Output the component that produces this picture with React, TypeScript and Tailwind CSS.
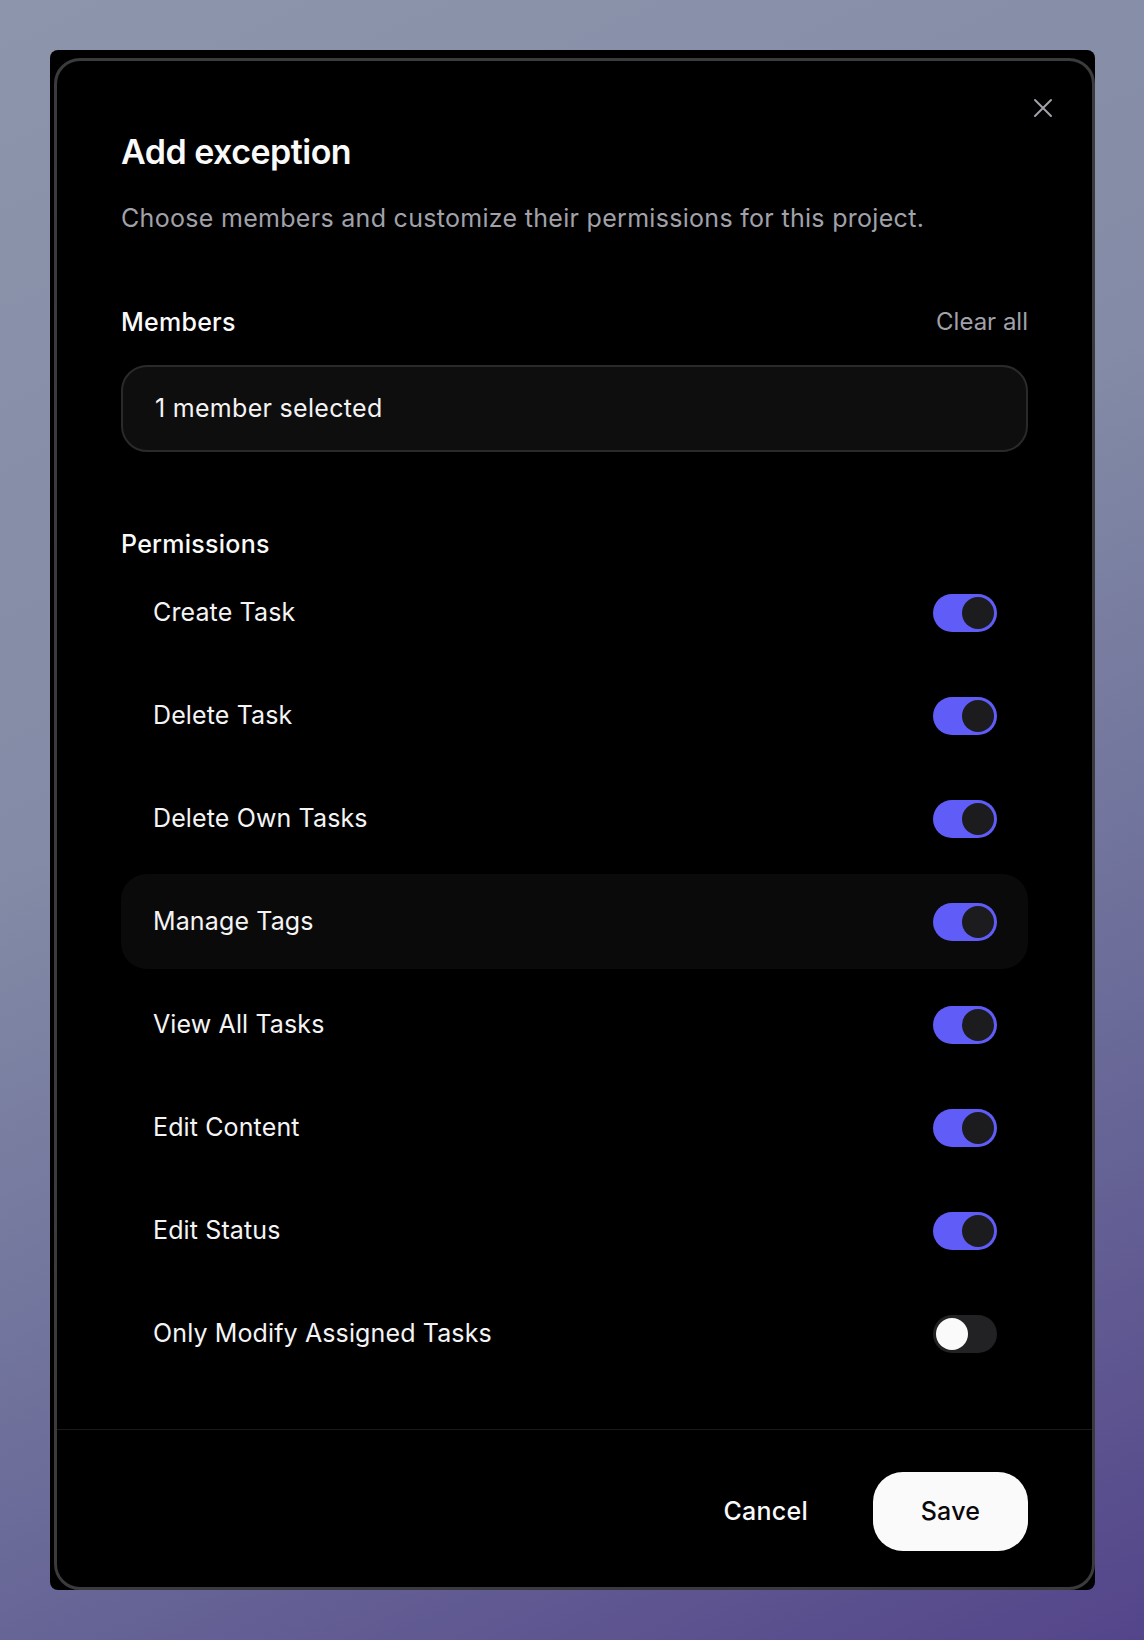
import { useState } from "react";

const permissions = [
  { key: "create", label: "Create Task", on: true },
  { key: "delete", label: "Delete Task", on: true },
  { key: "deleteOwn", label: "Delete Own Tasks", on: true },
  { key: "tags", label: "Manage Tags", on: true },
  { key: "viewAll", label: "View All Tasks", on: true },
  { key: "content", label: "Edit Content", on: true },
  { key: "status", label: "Edit Status", on: true },
  { key: "assigned", label: "Only Modify Assigned Tasks", on: false },
];

function Toggle({ on, onChange }: { on: boolean; onChange: () => void }) {
  return (
    <button
      type="button"
      role="switch"
      aria-checked={on}
      onClick={onChange}
      className={`flex h-[38px] w-[64px] shrink-0 items-center rounded-full p-[3px] ${
        on ? "justify-end bg-[#5f5cf7]" : "justify-start bg-[#222224]"
      }`}
    >
      <span className={`block h-[32px] w-[32px] rounded-full ${on ? "bg-[#1c1c1f]" : "bg-[#fafafa]"}`} />
    </button>
  );
}

export default function App() {
  const [state, setState] = useState(() => Object.fromEntries(permissions.map((p) => [p.key, p.on])));

  return (
    <div
      className="min-h-[1640px] w-full bg-[linear-gradient(155deg,#8c95ab_0%,#838ba6_40%,#6b6c99_70%,#54458a_100%)] pl-[50px] pt-[50px]"
      style={{ fontFamily: "Inter, 'Noto Sans', sans-serif" }}
    >
      <div className="w-[1045px] rounded-[8px] bg-black pl-[4px] pt-[8px]">
        <div className="relative flex flex-col overflow-hidden rounded-[26px] border-[3px] border-[#3b3b3e] bg-black">
          <button type="button" aria-label="Close" className="absolute right-[37px] top-[35px] p-[2px] text-[#a1a1aa]">
            <svg width="20" height="20" viewBox="0 0 20 20" fill="none" stroke="currentColor" strokeWidth="2" strokeLinecap="round">
              <path d="M2 2 18 18M18 2 2 18" />
            </svg>
          </button>

          <div className="px-[64px] pb-[48px] pt-[71px]">
            <h2 className="text-[34px] font-semibold leading-[40px] tracking-[-0.015em] text-[#fafafa]">Add exception</h2>
            <p className="mt-[30px] text-[25px] leading-[32px] tracking-[0.012em] text-[#a1a1aa]">
              Choose members and customize their permissions for this project.
            </p>

            <div className="mt-[72px] flex items-center justify-between">
              <span className="text-[25px] font-medium leading-[32px] tracking-[0.01em] text-[#fafafa]">Members</span>
              <button type="button" className="text-[24px] leading-[32px] text-[#a1a1aa]">
                Clear all
              </button>
            </div>
            <div className="mt-[27px] flex h-[87px] items-center rounded-[26px] border-2 border-[#2a2a2c] bg-[#0e0e0e] px-[32px] text-[25px] tracking-[0.012em] text-[#f4f4f5]">
              1 member selected
            </div>

            <div className="mt-[76px] text-[25px] font-medium leading-[32px] tracking-[0.01em] text-[#fafafa]">Permissions</div>
            <ul className="mt-[5px] flex flex-col gap-[8px]">
              {permissions.map((p) => (
                <li
                  key={p.key}
                  className={`flex h-[95px] items-center justify-between rounded-[26px] pl-[32px] pr-[31px] ${
                    p.key === "tags" ? "bg-[#0a0a0a]" : ""
                  }`}
                >
                  <span className="text-[25px] tracking-[0.005em] text-[#f4f4f5]">{p.label}</span>
                  <Toggle on={state[p.key]} onChange={() => setState((s) => ({ ...s, [p.key]: !s[p.key] }))} />
                </li>
              ))}
            </ul>
          </div>

          <div className="flex items-center justify-end gap-[33px] border-t border-[#1a1a1b] px-[64px] pb-[36px] pt-[42px]">
            <button type="button" className="h-[79px] px-[32px] text-[25px] font-medium tracking-[0.01em] text-[#fafafa]">
              Cancel
            </button>
            <button
              type="button"
              className="h-[79px] w-[155px] rounded-[30px] bg-[#fafafa] text-[25px] font-medium tracking-[0.01em] text-[#09090b]"
            >
              Save
            </button>
          </div>
        </div>
      </div>
    </div>
  );
}
